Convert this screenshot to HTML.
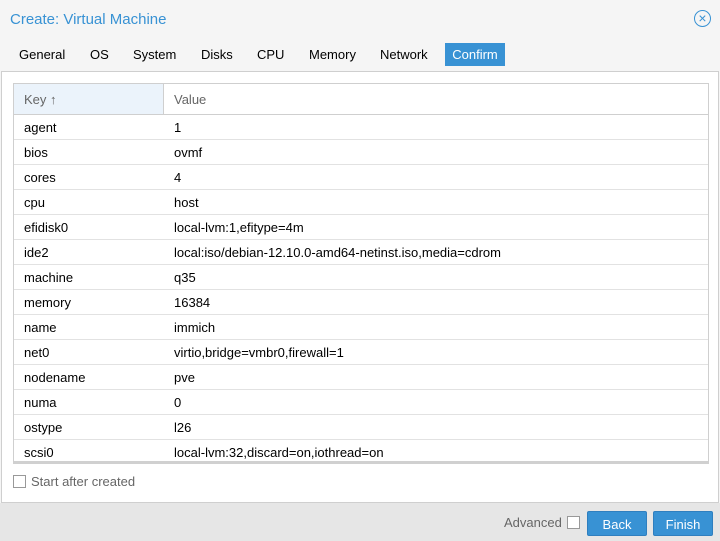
<!DOCTYPE html>
<html><head><style>
*{margin:0;padding:0;box-sizing:border-box}
body{width:720px;height:541px;background:#f5f5f5;font-family:"Liberation Sans",Arial,sans-serif;font-size:13px;color:#000;position:relative;overflow:hidden}
.title{position:absolute;left:10px;top:11px;font-size:15px;color:#3892d4}
.close{position:absolute;left:694px;top:10px;width:17px;height:17px;border:1px solid #3892d4;border-radius:50%;color:#3892d4;font-size:14px;line-height:14px;text-align:center}
.tabs{position:absolute;top:43px;left:0;height:23px}
.tab{position:absolute;top:0;height:23px;line-height:23px;padding:0 7px;font-size:13px}
.tab.a{background:#3892d4;color:#fff}
.body{position:absolute;left:1px;top:71px;width:718px;height:432px;background:#fff;border:1px solid #cfcfcf}
.grid{position:absolute;left:11px;top:11px;width:696px;height:381px;border:1px solid #cfcfcf;border-bottom:3px solid #d0d0d0}
.hd{height:31px;border-bottom:1px solid #cfcfcf;position:relative;color:#666}
.hd .k{position:absolute;left:0;top:0;width:150px;height:30px;background:#ebf3fb;border-right:1px solid #cfcfcf;padding:8px 10px}
.hd .v{position:absolute;left:160px;top:8px}
.row{height:25px;border-bottom:1px solid #e2e2e2;position:relative;line-height:26px}
.row .k{position:absolute;left:10px}
.row .v{position:absolute;left:160px}
.cb{position:absolute;width:13px;height:13px;border:1px solid #999;background:#fff}
.foot{position:absolute;left:0;top:503px;width:720px;height:38px;background:#e6e6e6}
.btn{position:absolute;top:8px;height:25px;line-height:25px;background:#3892d4;color:#fff;text-align:center;border-radius:2px;border:1px solid #2f7fbf}
</style></head><body>
<div class="title">Create: Virtual Machine</div>
<div class="close">×</div>
<div class="tabs">
<div class="tab" style="left:12px">General</div>
<div class="tab" style="left:83px">OS</div>
<div class="tab" style="left:126px">System</div>
<div class="tab" style="left:194px">Disks</div>
<div class="tab" style="left:250px">CPU</div>
<div class="tab" style="left:302px">Memory</div>
<div class="tab" style="left:373px">Network</div>
<div class="tab a" style="left:445px;width:60px;text-align:center">Confirm</div>
</div>
<div class="body">
<div class="grid">
<div class="hd"><div class="k">Key ↑</div><div class="v">Value</div></div>
<div class="row"><span class="k">agent</span><span class="v">1</span></div>
<div class="row"><span class="k">bios</span><span class="v">ovmf</span></div>
<div class="row"><span class="k">cores</span><span class="v">4</span></div>
<div class="row"><span class="k">cpu</span><span class="v">host</span></div>
<div class="row"><span class="k">efidisk0</span><span class="v">local-lvm:1,efitype=4m</span></div>
<div class="row"><span class="k">ide2</span><span class="v">local:iso/debian-12.10.0-amd64-netinst.iso,media=cdrom</span></div>
<div class="row"><span class="k">machine</span><span class="v">q35</span></div>
<div class="row"><span class="k">memory</span><span class="v">16384</span></div>
<div class="row"><span class="k">name</span><span class="v">immich</span></div>
<div class="row"><span class="k">net0</span><span class="v">virtio,bridge=vmbr0,firewall=1</span></div>
<div class="row"><span class="k">nodename</span><span class="v">pve</span></div>
<div class="row"><span class="k">numa</span><span class="v">0</span></div>
<div class="row"><span class="k">ostype</span><span class="v">l26</span></div>
<div class="row" style="border:none"><span class="k">scsi0</span><span class="v">local-lvm:32,discard=on,iothread=on</span></div>
</div>
<div class="cb" style="left:11px;top:403px"></div>
<div style="position:absolute;left:29px;top:402px;color:#666">Start after created</div>
</div>
<div class="foot">
<div style="position:absolute;left:504px;top:12px;color:#666">Advanced</div>
<div class="cb" style="left:567px;top:13px"></div>
<div class="btn" style="left:587px;width:60px">Back</div>
<div class="btn" style="left:653px;width:60px">Finish</div>
</div>
</body></html>
